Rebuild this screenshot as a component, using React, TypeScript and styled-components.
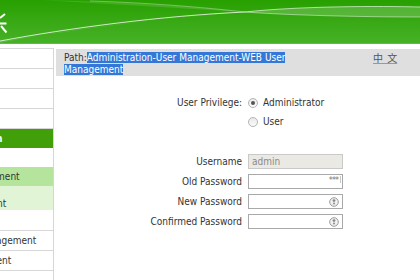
import React from 'react';
import styled, { createGlobalStyle } from 'styled-components';

const GlobalStyle = createGlobalStyle`
    html, body {
        margin: 0;
        background: #ffffff;
        font-family: "DejaVu Sans Condensed", "DejaVu Sans", sans-serif;
        font-size: 10px;
        color: #333333;
    }
`;

const Page = styled.div`
    display: flex;
    flex-direction: column;
    width: 420px;
    height: 280px;
    overflow: hidden;
`;

const Header = styled.div`
    position: relative;
    height: 43px;
    background: linear-gradient(#27a000 0%, #37a813 45%, #46b126 100%);
    border-bottom: 1px solid #5cc41e;
    flex-shrink: 0;
`;

const HeaderArt = styled.svg`
    position: absolute;
    inset: 0;
`;

const Body = styled.div`
    display: flex;
    align-items: stretch;
    margin-top: 4px;
    flex: 1;
`;

const Sidebar = styled.div`
    width: 53px;
    flex-shrink: 0;
    overflow: hidden;
    border-top: 1px solid #d6d6d6;
    border-right: 1px solid #d6d6d6;
`;

const SideList = styled.div`
    width: 140px;
    margin-left: -87px;
    display: flex;
    flex-direction: column;
`;

const SideItem = styled.div<{ pad: number; tone?: 'head' | 'active' | 'open'; rule?: boolean; h?: number }>`
    display: flex;
    align-items: center;
    height: ${ (p) => p.h ?? 19 }px;
    padding-left: ${ (p) => p.pad }px;
    white-space: nowrap;
    line-height: 12px;
    border-bottom: ${ (p) => (p.rule ? '1px solid #d6d6d6' : 'none') };
    background: ${ (p) => (p.tone === 'head' ? '#41a00a' : p.tone === 'active' ? '#b5e59c' : p.tone === 'open' ? '#e1f5d6' : 'transparent') };
    color: ${ (p) => (p.tone === 'head' ? '#ffffff' : '#333333') };
    font-weight: ${ (p) => (p.tone === 'head' ? 'bold' : 'normal') };
`;

const Main = styled.div`
    flex: 1;
    margin-left: 2px;
    padding-top: 1px;
    display: flex;
    flex-direction: column;
`;

const PathBar = styled.div`
    display: flex;
    background: #dfdfdf;
    padding: 3px 0 0 8px;
    line-height: 12px;
    min-height: 24px;
`;

const PathText = styled.div`
    width: 276px;
    color: #333333;
`;

const Selected = styled.span`
    background: #3477d6;
    color: #ffffff;
`;

const Lang = styled.a`
    margin-left: 33px;
    font-family: "Noto Sans CJK SC", sans-serif;
    font-size: 10px;
    color: #555555;
    text-decoration: underline;
    text-decoration-color: #999999;
    height: 12px;
    line-height: 12px;
    white-space: pre;
    word-spacing: 2px;
`;

const Form = styled.div`
    display: grid;
    grid-template-columns: 186px 1fr;
    column-gap: 6px;
    margin-top: 17px;
`;

const Label = styled.div`
    display: flex;
    align-items: center;
    justify-content: flex-end;
    color: #333333;
`;

const Cell = styled.div<{ h: number }>`
    height: ${ (p) => p.h }px;
    display: flex;
    align-items: center;
`;

const RadioRow = styled.label`
    display: flex;
    align-items: center;
    gap: 5px;
    color: #333333;
`;

const RadioDot = styled.span<{ checked?: boolean }>`
    position: relative;
    width: 8px;
    height: 8px;
    border-radius: 50%;
    border: 1px solid #b4b4b4;
    background: linear-gradient(#e9e9e9, #fbfbfb);
    &::after {
        content: '';
        display: ${ (p) => (p.checked ? 'block' : 'none') };
        position: absolute;
        left: 2px;
        top: 2px;
        width: 4px;
        height: 4px;
        border-radius: 50%;
        background: #555555;
    }
`;

const Spacer = styled.div`
    grid-column: 1 / span 2;
    height: 20px;
`;

const InputBox = styled.div<{ disabled?: boolean }>`
    position: relative;
    width: 90px;
    height: 13px;
    border: 1px solid ${ (p) => (p.disabled ? '#c9c9c9' : '#a9a9a9') };
    background: ${ (p) => (p.disabled ? '#ebe9e3' : '#ffffff') };
    color: #8a8a8a;
    padding-left: 3px;
    line-height: 13px;
    box-sizing: content-box;
`;

const Dots = styled.span`
    position: absolute;
    right: 4px;
    top: 1px;
    font-size: 9px;
    line-height: 8px;
    letter-spacing: -1px;
    color: #777777;
`;

const Caret = styled.span`
    position: absolute;
    right: 1px;
    top: 1px;
    width: 1px;
    height: 7px;
    background: #c8c8c8;
`;

const KeyIcon = styled.svg`
    position: absolute;
    right: 3px;
    top: 2px;
`;

const Key = () => (
    <KeyIcon width='10' height='10' viewBox='0 0 10 10'>
        <circle cx='5' cy='5' r='4.3' fill='#f2f2f2' stroke='#9a9a9a' strokeWidth='1'/>
        <circle cx='5' cy='3.6' r='1.4' fill='#8a8a8a'/>
        <path d='M3.6 7.2 L5 5 L6.4 7.2 Z' fill='#8a8a8a'/>
    </KeyIcon>
);

const rows = [
    { label: 'Username', disabled: true, value: 'admin' },
    { label: 'Old Password', dots: true },
    { label: 'New Password', key: true },
    { label: 'Confirmed Password', key: true },
];

export default function App() {
    return (
        <Page>
            <GlobalStyle/>
            <Header>
                <HeaderArt width='420' height='43' viewBox='0 0 420 43'>
                    <path d='M40 0 C120 2 190 6 245 12 C170 16 80 30 0 41 L0 43 C60 30 160 18 245 12' fill='rgba(255,255,255,0.12)'/>
                    <path d='M0 41 C70 28 160 16 245 12' fill='none' stroke='rgba(255,255,255,0.75)' strokeWidth='1'/>
                    <path d='M90 1 C150 3 200 7 245 12' fill='none' stroke='rgba(255,255,255,0.35)' strokeWidth='1'/>
                    <path d='M245 12 C300 6 380 6 420 7 L420 17 C380 17 300 16 245 12 Z' fill='rgba(255,255,255,0.18)'/>
                    <path d='M245 12 C300 6 380 6 420 7' fill='none' stroke='rgba(255,255,255,0.6)' strokeWidth='1'/>
                    <path d='M245 12 C300 16 380 17 420 17' fill='none' stroke='rgba(255,255,255,0.45)' strokeWidth='1'/>
                    <path d='M0 18 L5 14 M0 23.5 H6.5 M1 26 L6.5 32.5' fill='none' stroke='#ffffff' strokeWidth='2'/>
                </HeaderArt>
            </Header>
            <Body>
                <Sidebar>
                    <SideList>
                        <SideItem pad={ 20 } rule>Status</SideItem>
                        <SideItem pad={ 20 } rule>Network</SideItem>
                        <SideItem pad={ 20 } rule>Security</SideItem>
                        <SideItem pad={ 20 } rule>Application</SideItem>
                        <SideItem pad={ 14 } tone='head'>Administration</SideItem>
                        <SideItem pad={ 24 }>Account</SideItem>
                        <SideItem pad={ 24 } tone='active'>User Management</SideItem>
                        <SideItem pad={ 34 } tone='open' h={ 24 }>WEB User<br/>Management</SideItem>
                        <SideItem pad={ 34 } h={ 20 } rule>CLI User</SideItem>
                        <SideItem pad={ 20 } rule>Firmware Management</SideItem>
                        <SideItem pad={ 20 } rule>Log Management</SideItem>
                    </SideList>
                </Sidebar>
                <Main>
                    <PathBar>
                        <PathText>
                            Path:<Selected>Administration-User Management-WEB User Management</Selected>
                        </PathText>
                        <Lang>中 文</Lang>
                    </PathBar>
                    <Form>
                        <Label>User Privilege:</Label>
                        <Cell h={ 19 }>
                            <RadioRow><RadioDot checked/>Administrator</RadioRow>
                        </Cell>
                        <Label/>
                        <Cell h={ 19 }>
                            <RadioRow><RadioDot/>User</RadioRow>
                        </Cell>
                        <Spacer/>
                        { rows.map((r) => (
                            <React.Fragment key={ r.label }>
                                <Label>{ r.label }</Label>
                                <Cell h={ 20 }>
                                    <InputBox disabled={ r.disabled }>
                                        { r.value }
                                        { r.dots && <><Dots>***</Dots><Caret/></> }
                                        { r.key && <Key/> }
                                    </InputBox>
                                </Cell>
                            </React.Fragment>
                        )) }
                    </Form>
                </Main>
            </Body>
        </Page>
    );
}
